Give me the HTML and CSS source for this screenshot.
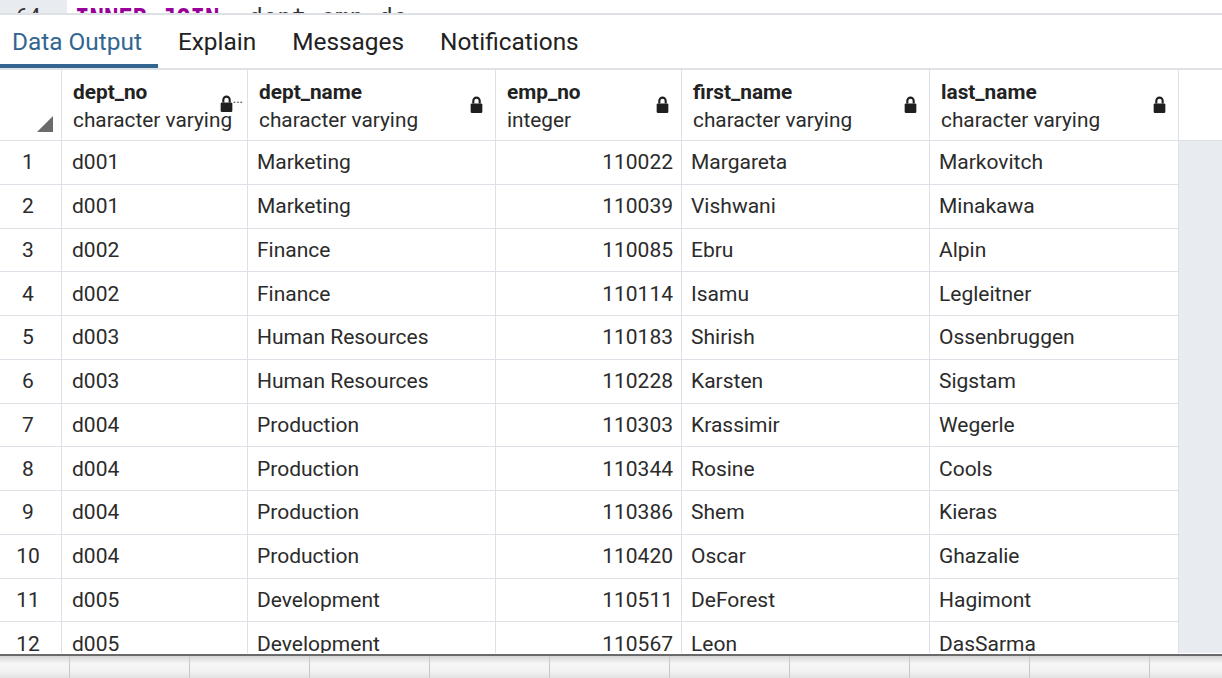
FILE: index.html
```html
<!DOCTYPE html>
<html>
<head>
<meta charset="utf-8">
<link rel="stylesheet" href="styles.css">
</head>
<body>
<div class="app">
  <div class="editor">
    <div class="gutter"><span class="lineno">64</span></div>
    <div class="code"><span class="kw">INNER JOIN</span>  <span class="ident">dept_emp de</span></div>
  </div>
  <div class="tabs">
    <div class="tab active">Data Output</div>
    <div class="tab">Explain</div>
    <div class="tab">Messages</div>
    <div class="tab">Notifications</div>
  </div>
  <div class="grid-wrap">
    <div class="grid">
      <div class="row head">
        <div class="cell rn"><span class="corner"></span></div>
        <div class="cell c1"><div class="hname"><b>dept_no</b><span>character varying</span></div><span class="lock narrow"><svg viewBox="0 0 12 16" width="13" height="17"><path d="M3 7V4.5a3 3 0 0 1 6 0V7" fill="none" stroke="#1f1f1f" stroke-width="2"/><rect x="0.5" y="7" width="11" height="9" rx="1.2" fill="#1f1f1f"/></svg><i>...</i></span></div>
        <div class="cell c2"><div class="hname"><b>dept_name</b><span>character varying</span></div><span class="lock"><svg viewBox="0 0 12 16" width="13" height="17"><path d="M3 7V4.5a3 3 0 0 1 6 0V7" fill="none" stroke="#1f1f1f" stroke-width="2"/><rect x="0.5" y="7" width="11" height="9" rx="1.2" fill="#1f1f1f"/></svg></span></div>
        <div class="cell c3"><div class="hname"><b>emp_no</b><span>integer</span></div><span class="lock"><svg viewBox="0 0 12 16" width="13" height="17"><path d="M3 7V4.5a3 3 0 0 1 6 0V7" fill="none" stroke="#1f1f1f" stroke-width="2"/><rect x="0.5" y="7" width="11" height="9" rx="1.2" fill="#1f1f1f"/></svg></span></div>
        <div class="cell c4"><div class="hname"><b>first_name</b><span>character varying</span></div><span class="lock"><svg viewBox="0 0 12 16" width="13" height="17"><path d="M3 7V4.5a3 3 0 0 1 6 0V7" fill="none" stroke="#1f1f1f" stroke-width="2"/><rect x="0.5" y="7" width="11" height="9" rx="1.2" fill="#1f1f1f"/></svg></span></div>
        <div class="cell c5"><div class="hname"><b>last_name</b><span>character varying</span></div><span class="lock"><svg viewBox="0 0 12 16" width="13" height="17"><path d="M3 7V4.5a3 3 0 0 1 6 0V7" fill="none" stroke="#1f1f1f" stroke-width="2"/><rect x="0.5" y="7" width="11" height="9" rx="1.2" fill="#1f1f1f"/></svg></span></div>
        <div class="filler head-fill"></div>
      </div>
      <div class="row"><div class="cell rn">1</div><div class="cell c1">d001</div><div class="cell c2">Marketing</div><div class="cell c3 num">110022</div><div class="cell c4">Margareta</div><div class="cell c5">Markovitch</div><div class="filler"></div></div>
      <div class="row"><div class="cell rn">2</div><div class="cell c1">d001</div><div class="cell c2">Marketing</div><div class="cell c3 num">110039</div><div class="cell c4">Vishwani</div><div class="cell c5">Minakawa</div><div class="filler"></div></div>
      <div class="row"><div class="cell rn">3</div><div class="cell c1">d002</div><div class="cell c2">Finance</div><div class="cell c3 num">110085</div><div class="cell c4">Ebru</div><div class="cell c5">Alpin</div><div class="filler"></div></div>
      <div class="row"><div class="cell rn">4</div><div class="cell c1">d002</div><div class="cell c2">Finance</div><div class="cell c3 num">110114</div><div class="cell c4">Isamu</div><div class="cell c5">Legleitner</div><div class="filler"></div></div>
      <div class="row"><div class="cell rn">5</div><div class="cell c1">d003</div><div class="cell c2">Human Resources</div><div class="cell c3 num">110183</div><div class="cell c4">Shirish</div><div class="cell c5">Ossenbruggen</div><div class="filler"></div></div>
      <div class="row"><div class="cell rn">6</div><div class="cell c1">d003</div><div class="cell c2">Human Resources</div><div class="cell c3 num">110228</div><div class="cell c4">Karsten</div><div class="cell c5">Sigstam</div><div class="filler"></div></div>
      <div class="row"><div class="cell rn">7</div><div class="cell c1">d004</div><div class="cell c2">Production</div><div class="cell c3 num">110303</div><div class="cell c4">Krassimir</div><div class="cell c5">Wegerle</div><div class="filler"></div></div>
      <div class="row"><div class="cell rn">8</div><div class="cell c1">d004</div><div class="cell c2">Production</div><div class="cell c3 num">110344</div><div class="cell c4">Rosine</div><div class="cell c5">Cools</div><div class="filler"></div></div>
      <div class="row"><div class="cell rn">9</div><div class="cell c1">d004</div><div class="cell c2">Production</div><div class="cell c3 num">110386</div><div class="cell c4">Shem</div><div class="cell c5">Kieras</div><div class="filler"></div></div>
      <div class="row"><div class="cell rn">10</div><div class="cell c1">d004</div><div class="cell c2">Production</div><div class="cell c3 num">110420</div><div class="cell c4">Oscar</div><div class="cell c5">Ghazalie</div><div class="filler"></div></div>
      <div class="row"><div class="cell rn">11</div><div class="cell c1">d005</div><div class="cell c2">Development</div><div class="cell c3 num">110511</div><div class="cell c4">DeForest</div><div class="cell c5">Hagimont</div><div class="filler"></div></div>
      <div class="row"><div class="cell rn">12</div><div class="cell c1">d005</div><div class="cell c2">Development</div><div class="cell c3 num">110567</div><div class="cell c4">Leon</div><div class="cell c5">DasSarma</div><div class="filler"></div></div>
    </div>
  </div>
  <div class="statusbar">
    <span class="seg first"></span><span class="seg"></span><span class="seg"></span><span class="seg"></span><span class="seg"></span><span class="seg"></span><span class="seg"></span><span class="seg"></span><span class="seg"></span><span class="seg"></span><span class="seg"></span>
  </div>
</div>
</body>
</html>
```
FILE: styles.css
```css
* { box-sizing: border-box; }
html, body { margin: 0; padding: 0; background: #fff; }
body { width: 1222px; height: 678px; overflow: hidden; font-family: Roboto, "Liberation Sans", sans-serif; color: #222; }
.app { display: flex; flex-direction: column; height: 678px; }

.editor { height: 15px; display: flex; overflow: hidden; border-bottom: 2px solid #dde0e4; flex: none; }
.gutter { width: 67px; height: 13px; background: #e8ebef; overflow: hidden; }
.lineno { display: block; padding-left: 16px; font-size: 22px; line-height: 22px; margin-top: 6px; color: #333; }
.code { height: 13px; padding: 6px 0 0 8px; font-family: "DejaVu Sans Mono", monospace; font-size: 24px; line-height: 24px; white-space: pre; overflow: hidden; }
.kw { color: #990099; font-weight: bold; }
.ident { color: #333; }

.tabs { display: flex; height: 55px; flex: none; border-bottom: 2px solid #dfe2e6; }
.tab { font-size: 24.4px; line-height: 44px; padding: 5px 18px 0; height: 53px; color: #222; }
.tab.active { color: #326690; padding: 5px 16px 0 12px; border-bottom: 4px solid #326690; }
.tab:nth-child(2) { padding-left: 20px; }

.grid-wrap { flex: none; height: 583px; overflow: hidden; }
.grid { display: flex; flex-direction: column; }
.row { display: flex; height: 43.75px; flex: none; }
.row.head { height: 71px; }
.cell { flex: none; border-right: 1px solid #dde0e6; border-bottom: 1px solid #dde0e6; font-size: 21px; color: #2b2b2b; display: flex; align-items: center; padding: 0 10px; white-space: nowrap; overflow: hidden; }
.rn { width: 62px; justify-content: center; padding: 0 5px 0 0; }
.c1 { width: 186px; }
.c2 { width: 248px; padding-left: 9px; }
.c3 { width: 186px; }
.c4 { width: 248px; padding-left: 9px; }
.c5 { width: 249px; padding-left: 9px; }
.num { justify-content: flex-end; padding-right: 8px; }
.filler { flex: 1; background: #e8ebf0; border-left: 1px solid #dde0e6; margin-left: -1px; }
.head-fill { background: #fff; border-left: none; border-bottom: 1px solid #dde0e6; margin-left: 0; }

.head .cell { position: relative; padding-left: 11px; }
.head .rn { padding: 0; }
.corner { position: absolute; right: 8px; bottom: 8px; width: 0; height: 0; border-left: 16px solid transparent; border-bottom: 16px solid #6b6b6b; }
.hname { display: flex; flex-direction: column; line-height: 28px; margin-top: 1px; }
.hname b { font-weight: 700; font-size: 20.8px; color: #222; }
.hname span { font-size: 20.8px; color: #2b2b2b; }
.lock { position: absolute; right: 12px; top: 26px; display: flex; align-items: flex-start; }
.lock.narrow { right: 4px; top: 25px; }
.lock i { font-style: normal; font-size: 13px; line-height: 8px; color: #333; }

.statusbar { flex: 1; display: flex; border-top: 2px solid #6a6a6a; margin-top: 1px; background: linear-gradient(#d6d6d6, #f6f6f6 35%, #f2f2f2 70%, #e2e2e2); }
.seg { width: 120px; flex: none; border-right: 1px solid #c9c9c9; }
.seg.first { width: 70px; }
```
